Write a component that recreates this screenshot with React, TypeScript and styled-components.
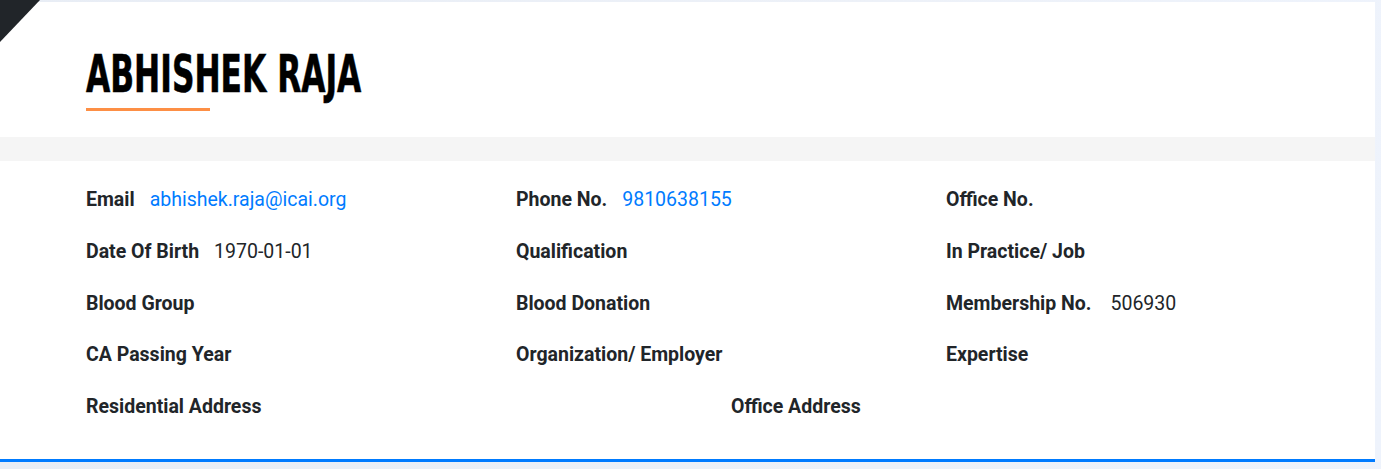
import React from "react";
import styled, { createGlobalStyle } from "styled-components";

const Global = createGlobalStyle`
  html, body { margin: 0; padding: 0; }
  body {
    background: linear-gradient(100deg, #e8edf5 0%, #edf1f8 60%, #eef3fc 100%);
    font-family: Roboto, "Liberation Sans", sans-serif;
    color: #212529;
  }
`;

const Page = styled.div`
  padding-top: 2px;
  width: 1375px;
`;

const Card = styled.section`
  position: relative;
  background: #ffffff;
  border-bottom: 3px solid #007bff;
`;

const Corner = styled.div`
  position: absolute;
  top: -2px;
  left: 0;
  width: 0;
  height: 0;
  border-top: 42px solid #212529;
  border-right: 40px solid transparent;
`;

const Header = styled.header`
  height: 135px;
  padding: 44px 0 0 86px;
  box-sizing: border-box;
`;

const Name = styled.h1`
  margin: 0;
  font-family: "Liberation Sans Narrow", "DejaVu Sans Condensed", "Liberation Sans", sans-serif;
  font-weight: 700;
  font-size: 51px;
  line-height: 58px;
  color: #000;
  transform: scaleX(0.682);
  transform-origin: left center;
  white-space: nowrap;
  -webkit-text-stroke: 0.6px #000;
`;

const Underline = styled.div`
  width: 124px;
  height: 3px;
  margin-top: 4px;
  background: #fd8f45;
`;

const Band = styled.div`
  height: 24px;
  background: #f5f5f5;
`;

const Details = styled.div`
  padding: 24px 0 38px 86px;
  display: flex;
  flex-direction: column;
  gap: 22.75px;
`;

const Row = styled.div<{ $cols: number }>`
  display: grid;
  grid-template-columns: repeat(${(p) => p.$cols}, ${(p) => 1290 / p.$cols}px);
`;

const Field = styled.div`
  font-size: 19.5px;
  line-height: 29px;
  white-space: nowrap;
`;

const Label = styled.span`
  font-weight: 700;
  color: #212529;
`;

const Value = styled.span<{ $link?: boolean; $gap: number }>`
  margin-left: ${(p) => p.$gap}px;
  font-weight: 400;
  color: ${(p) => (p.$link ? "#007bff" : "#212529")};
`;

type F = { label: string; value?: string; link?: boolean; gap?: number };

const rows: F[][] = [
  [
    { label: "Email", value: "abhishek.raja@icai.org", link: true },
    { label: "Phone No.", value: "9810638155", link: true },
    { label: "Office No." },
  ],
  [
    { label: "Date Of Birth", value: "1970-01-01" },
    { label: "Qualification" },
    { label: "In Practice/ Job" },
  ],
  [
    { label: "Blood Group" },
    { label: "Blood Donation" },
    { label: "Membership No.", value: "506930", gap: 19 },
  ],
  [
    { label: "CA Passing Year" },
    { label: "Organization/ Employer" },
    { label: "Expertise" },
  ],
  [{ label: "Residential Address" }, { label: "Office Address" }],
];

export default function App() {
  return (
    <Page>
      <Global />
      <Card>
        <Corner />
        <Header>
          <Name>ABHISHEK RAJA</Name>
          <Underline />
        </Header>
        <Band />
        <Details>
          {rows.map((r, i) => (
            <Row key={i} $cols={r.length}>
              {r.map((f) => (
                <Field key={f.label}>
                  <Label>{f.label}</Label>
                  {f.value && (
                    <Value $link={f.link} $gap={f.gap ?? 15}>
                      {f.value}
                    </Value>
                  )}
                </Field>
              ))}
            </Row>
          ))}
        </Details>
      </Card>
    </Page>
  );
}
